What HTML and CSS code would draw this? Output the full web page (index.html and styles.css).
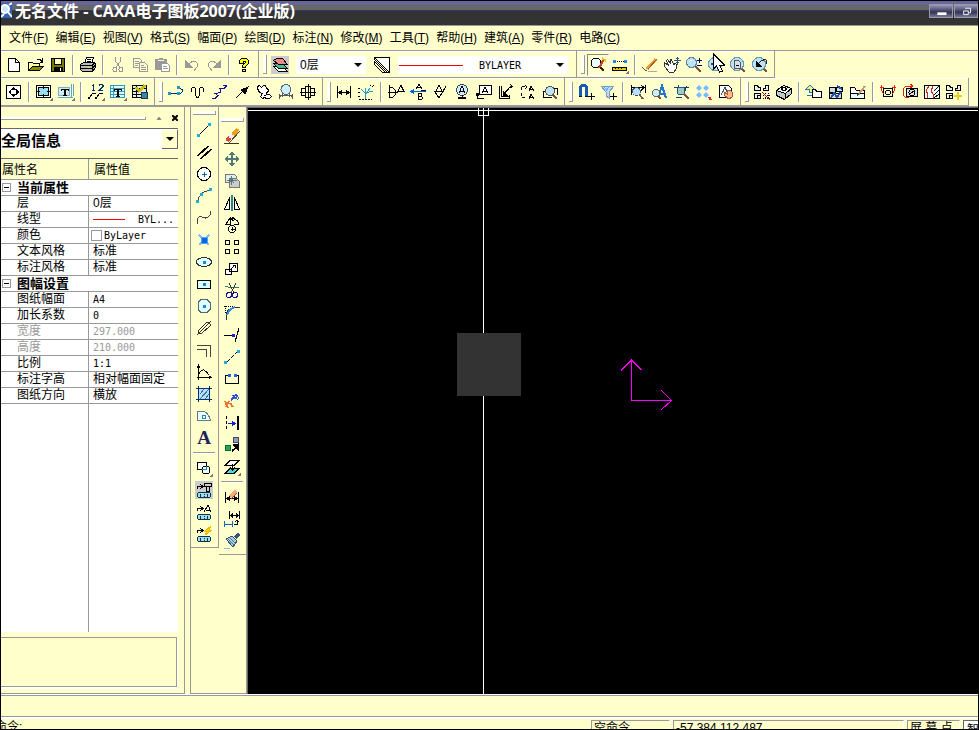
FILE: index.html
```html
<!DOCTYPE html>
<html lang="zh-CN">
<head>
    <meta charset="UTF-8">
    <meta name="viewport" content="width=device-width, initial-scale=1.0">
    <title>无名文件 - CAXA电子图板2007(企业版)</title>
    <link rel="stylesheet" href="styles.css">
</head>
<body>

<svg class="defs" aria-hidden="true">
    <symbol id="lens" viewBox="0 0 18 18">
        <path d="M10 10l6 6" stroke="#754" stroke-width="2"/>
        <circle cx="6.500" cy="6.500" r="5" fill="#bde3f7" stroke="#5a8aa0"/>
        <path d="M4 6q1-2 3-2" stroke="#fff"/>
    </symbol>
    <symbol id="biglens" viewBox="0 0 18 18">
        <path d="M12 12l4 4" stroke="#754" stroke-width="2"/>
        <circle cx="8" cy="8" r="6.500" fill="#bde3f7" stroke="#6a9ab0"/>
    </symbol>
    <symbol id="more" viewBox="0 0 18 18"><path d="M18 14v4h-4z" fill="#777" stroke="none"/></symbol>
    <symbol id="chip" viewBox="0 0 18 18"><rect x="2.500" y="11.500" width="13" height="5" rx="2" fill="#9de" stroke="#134"/><path d="M5.500 12.500v3M12.500 12.500v3M9 13v1M9 15v1" stroke="#134"/></symbol>
</svg>

<div class="app">
    <header class="titlebar">
        <svg class="app-icon" viewBox="0 0 11 18"><path d="M0 2h11v15H0z" fill="#2d62b5"/><circle cx="4" cy="8" r="4" fill="#cfe5ff" stroke="#fff" stroke-width="2"/><path d="M7 11l4 5M0 16l3-3M8 4l3-2" stroke="#fff" stroke-width="2"/></svg>
        <h1>无名文件 - CAXA电子图板2007(企业版)</h1>
        <div class="window-buttons">
            <button aria-label="最小化"><svg viewBox="0 0 24 14"><path d="M8 8h10v3H8z" fill="#fff"/></svg></button>
            <button aria-label="还原"><svg viewBox="0 0 24 14"><path d="M11 3.500h6v5h-2M9.500 6.500h5v4h-5z" fill="none" stroke="#fff"/></svg></button>
        </div>
    </header>

    <nav class="menubar">
        <button>文件(<u>F</u>)</button>
        <button>编辑(<u>E</u>)</button>
        <button>视图(<u>V</u>)</button>
        <button>格式(<u>S</u>)</button>
        <button>幅面(<u>P</u>)</button>
        <button>绘图(<u>D</u>)</button>
        <button>标注(<u>N</u>)</button>
        <button>修改(<u>M</u>)</button>
        <button>工具(<u>T</u>)</button>
        <button>帮助(<u>H</u>)</button>
        <button>建筑(<u>A</u>)</button>
        <button>零件(<u>R</u>)</button>
        <button>电路(<u>C</u>)</button>
    </nav>

    <div class="toolbar-row upper">
        <div class="band first">
            <button class="tool" aria-label="新建"><svg viewBox="0 0 18 18"><path d="M3.500 2.500h7l4 4v9h-11z" fill="#fff"/><path d="M10.500 2.500v4h4"/></svg></button>
            <button class="tool" aria-label="打开"><svg viewBox="0 0 18 18"><path d="M1.500 14.500v-8h4l1 1h6v3" fill="#ffffa0"/><path d="M1.500 14.500l4-4h11l-4 4z" fill="#880"/><path d="M10 3.500h3l2 2M15.500 2v4h-3"/></svg></button>
            <button class="tool" aria-label="保存"><svg viewBox="0 0 18 18"><path d="M2.500 2.500h13v13h-13z" fill="#770"/><path d="M5.500 2.500h7v6h-7z" fill="#ffc"/><path d="M5 11h8v4H5z" fill="#000"/><path d="M11 12h1v3h-1z" fill="#fff" stroke="none"/></svg></button>
            <span class="sep"></span>
            <button class="tool" aria-label="打印"><svg viewBox="0 0 18 18"><path d="M5.500 7.500l2-6h7l-2 6z" fill="#fff"/><path d="M8 3.500h4M8 5.500h4"/><path d="M1.500 8.500l3-2h11l1 1v4l-3 4h-10l-2-2z" fill="#bbb"/><path d="M2 9.500h11l3-3M2 12.500h11l3-3M13.500 9v6M4 15.500h9"/><path d="M9 11h2" stroke="#ee0"/></svg></button>
            <span class="sep"></span>
            <button class="tool" aria-label="剪切"><svg viewBox="0 0 18 18"><path d="M6.500 1v4l4 6M11.500 1v4l-4 6" stroke="#999"/><circle cx="6" cy="13.500" r="2" stroke="#999"/><circle cx="12" cy="13.500" r="2" stroke="#999"/></svg></button>
            <button class="tool" aria-label="复制"><svg viewBox="0 0 18 18"><g stroke="#999"><path d="M2.500 2.500h6l2 2v7h-8zM4 5.500h4M4 7.500h4M4 9.500h3"/><path d="M8.500 6.500h5l3 3v6h-8z" fill="#ffc"/><path d="M10 9.500h3M10 11.500h5M10 13.500h5"/></g></svg></button>
            <button class="tool" aria-label="粘贴"><svg viewBox="0 0 18 18"><g stroke="#999"><path d="M2.500 3.500h11v10h-11z" fill="#999"/><path d="M5 4.500h6" stroke="#ffc"/><path d="M6 2.500h4"/><path d="M8.500 7.500h6l2 2v6h-8z" fill="#fff"/><path d="M10 10.500h4M10 12.500h5"/></g></svg></button>
            <span class="sep"></span>
            <button class="tool" aria-label="撤销"><svg viewBox="0 0 18 18"><path d="M5 9q4-5 8-3q4 3 0 6l-2 3M2.500 5v6h6z" stroke="#999"/><path d="M3 6v5h5z" fill="#999" stroke="none"/></svg></button>
            <button class="tool" aria-label="重做"><svg viewBox="0 0 18 18"><path d="M13 9q-4-5-8-3q-4 3 0 6l2 3M15.500 5v6h-6z" stroke="#999"/><path d="M15 6v5h-5z" fill="#999" stroke="none"/></svg></button>
            <span class="sep"></span>
            <button class="tool" aria-label="帮助"><svg viewBox="0 0 18 18"><path d="M4.500 7.500V4.500l2-2h5l2 2v3l-3 3v1h-3v-2l3-3v-1h-2v2z" fill="#ff0"/><path d="M7.500 13.500h3v2h-3z" fill="#ff0"/></svg></button>
        </div>
        <div class="band">
            <button class="tool pressed" aria-label="层控制"><svg viewBox="0 0 18 18"><path d="M2.500 10.500h9l5 5h-9z" fill="#fff"/><path d="M2.500 7.500h9l5 5h-9z" fill="#4b8"/><path d="M2.500 4.500l3-2h6l5 6h-9z" fill="#e88"/></svg></button>
            <div class="combo layer-combo">
                <select aria-label="当前层"><option>0层</option></select>
                <svg class="arrow" viewBox="0 0 8 4"><path d="M0 0h8L4 4z"/></svg>
            </div>
            <button class="tool" aria-label="线型"><svg viewBox="0 0 18 18"><path d="M1.500 1.500h15v15z" fill="#fff"/><path d="M1.500 1.500v2l13 13h2M1.500 5.500l11 11M1.500 8.500l8 8h7M1.500 5v4"/></svg></button>
            <div class="combo line-combo">
                <span class="line-sample"></span>
                <select class="mono" aria-label="当前线型"><option>BYLAYER</option></select>
                <svg class="arrow" viewBox="0 0 8 4"><path d="M0 0h8L4 4z"/></svg>
            </div>
        </div>
        <div class="band">
            <button class="tool sunken" aria-label="捕捉"><svg viewBox="0 0 18 18"><circle cx="7" cy="7" r="5" fill="#eff"/><path d="M10 10l5 5" stroke="#222" stroke-width="2"/><path d="M15 3l-5 9" stroke="#c42" stroke-width="2"/><path d="M13 2l4 3" stroke="#fb3" stroke-width="2"/></svg></button>
            <button class="tool" aria-label="测量"><svg viewBox="0 0 18 18"><path d="M2 4h3v3H2zM13 4h3v3h-3z" fill="#28d" stroke="none"/><path d="M6 5.500h7" stroke-dasharray="1 1"/><path d="M1.500 11.500h14v3h-14z" fill="#ec0"/><path d="M4.500 11v2M7.500 11v2M10.500 11v2"/><use href="#more"/></svg></button>
            <span class="sep"></span>
            <button class="tool" aria-label="重画"><svg viewBox="0 0 18 18"><path d="M15 3L6 13" stroke="#e93" stroke-width="3"/><path d="M16 3L7 13" stroke="#a52"/><path d="M1 11l3 3h2" stroke="#742"/><path d="M7 15.500h9" stroke="#aaa"/></svg></button>
            <button class="tool" aria-label="动态平移"><svg viewBox="0 0 18 18"><path d="M1.500 6.500l4 3-2-5 1-1 3 4V3.500h1l2 5 2-1 1 1v4l-3 4h-4l-5-6z" fill="#fff" stroke="#333"/><path d="M14.500 1v8M11 4.500h7M13 2.500h3M13 6.500h3" stroke="#357"/></svg></button>
            <button class="tool" aria-label="动态缩放"><svg viewBox="0 0 18 18"><use href="#lens"/><path d="M12 4.500h5M14.500 2v5M12 9.500h5" stroke="#006"/></svg></button>
            <button class="tool hovered" aria-label="显示全部"><svg viewBox="0 0 18 18"><use href="#biglens"/><path d="M8 4v8M4 8h8" stroke="#247" stroke-width="2"/></svg><svg class="pointer" viewBox="0 0 13 21"><path d="M1.500 1v15l3-3 3 6 3-1-3-6h5z" fill="#fff" stroke="#000"/></svg></button>
            <button class="tool" aria-label="显示窗口"><svg viewBox="0 0 18 18"><use href="#biglens"/><path d="M5.500 4.500h4l2 2v6h-6z" fill="#dde" stroke="#555"/><path d="M7 9.500h3"/></svg></button>
            <button class="tool" aria-label="显示上一步"><svg viewBox="0 0 18 18"><use href="#biglens"/><path d="M7 9q3-6 8-5v4" stroke="#222"/><path d="M5 5v6h6z" fill="#000" stroke="none"/></svg></button>
        </div>
    </div>

    <div class="toolbar-row">
        <div class="band first">
            <button class="tool" aria-label="图幅"><svg viewBox="0 0 18 18"><path d="M1.500 2.500h14v13h-14z" fill="#fff"/><path d="M1.500 2.500h14v13h-14z"/><path d="M8.500 4l3 3h-6zM8.500 14l3-3h-6zM3 9l3-3v6zM14 9l-3-3v6z" fill="#000" stroke="none"/></svg></button>
            <span class="sep"></span>
            <button class="tool" aria-label="图框"><svg viewBox="0 0 18 18"><path d="M1.500 2.500h14v12h-14z" fill="#fff"/><path d="M3.500 4.500h10v8h-10z" fill="#9de"/><path d="M8.500 3v3M8.500 11v3M2 8.500h3M12 8.500h3"/><use href="#more"/></svg></button>
            <button class="tool" aria-label="标题栏"><svg viewBox="0 0 18 18"><path d="M1 14.500h15M14.500 1v14M16.500 1v12" stroke="#5ac"/><path d="M1.500 4.500h11v8h-11z" fill="#cee" stroke="#8ab"/><path d="M4.500 8V6.500h7V8M6 12.500h4"/><path d="M8 7v6" stroke-width="2"/><use href="#more"/></svg></button>
            <span class="sep"></span>
            <button class="tool" aria-label="零件序号"><svg viewBox="0 0 18 18"><path d="M6.500 1v6M5 2.500h1M5 7.500h3M12 2.500l1-1h2l1 1v1l-4 4h4" stroke="#036"/><path d="M2 15l4-5h3M9 15l4-5h3"/><path d="M1 14h2v2H1zM8 14h2v2H8z" fill="#000" stroke="none"/><use href="#more"/></svg></button>
            <button class="tool" aria-label="明细表"><svg viewBox="0 0 18 18"><path d="M1.500 2.500h14v12h-14z" fill="#dff" stroke="#39b"/><path d="M2 5.500h13M2 8.500h13M2 11.500h13M4.500 3v11" stroke="#39b"/><path d="M5.500 8V6.500h7V8M7 13.500h4"/><path d="M9 7v6" stroke-width="2"/><use href="#more"/></svg></button>
            <button class="tool" aria-label="图纸配置"><svg viewBox="0 0 18 18"><path d="M1.500 2.500h14v12h-14z" fill="#dee"/><path d="M2 5.500h13M2 8.500h8M2 11.500h8M5.500 3v11"/><path d="M5 4l3 4 2-1 4-5" stroke="#cb0" stroke-width="3"/><path d="M10.500 9.500h6v6h-6z" fill="#38a" stroke="#234"/></svg></button>
        </div>
        <div class="band">
            <button class="tool" aria-label="多段线"><svg viewBox="0 0 18 18"><path d="M2 10.500h10q5-1 3-4l-3-2" stroke="#036"/><path d="M1 9h3v3H1zM10 9h3v3h-3zM10 3h3v3h-3z" fill="#29c" stroke="none"/></svg></button>
            <button class="tool" aria-label="波浪线"><svg viewBox="0 0 18 18"><path d="M2.500 9V6l1-2h2l1 2v6l1 2h2l1-2V6l1-2h2l1 2v3"/></svg></button>
            <button class="tool" aria-label="双折线"><svg viewBox="0 0 18 18"><path d="M1 15.500h3l3-3-3-2 6-1-1-4h4l3-3M12 2.500h4" stroke="#119"/></svg></button>
            <button class="tool" aria-label="箭头"><svg viewBox="0 0 18 18"><path d="M3 15l6-6"/><path d="M15 4l-3 7-4-4z" fill="#000"/></svg></button>
            <button class="tool" aria-label="齿轮"><svg viewBox="0 0 18 18"><path d="M2.500 3.500l2-1 2 2 2-2h2l1 3 2 1v2l-2 1v2h3l2 2-2 2h-3l-2-1-2 1-2-2 2-3-3-1-2-4z" fill="#fff"/><path d="M9 12h2"/></svg></button>
            <button class="tool" aria-label="圆弧拟合"><svg viewBox="0 0 18 18"><circle cx="9" cy="6.500" r="5" fill="#cef" stroke="#567"/><path d="M2.500 16v-4l3 1 3-1 4 1 3-1v4M6 11l-3 3M12 11l3 3" stroke="#555"/></svg></button>
            <button class="tool" aria-label="孔轴"><svg viewBox="0 0 18 18"><path d="M2.500 5.500h4v7h-4zM6.500 3.500h5v11h-5zM11.500 5.500h4v7h-4zM1 9.500h16M9.500 1v16"/></svg></button>
        </div>
        <div class="band">
            <button class="tool" aria-label="基本标注"><svg viewBox="0 0 18 18"><path d="M2.500 3v12M15.500 3v12M2 9.500h14"/><path d="M3 9.500l4-3v6zM15 9.500l-4-3v6z" fill="#000" stroke="none"/></svg></button>
            <button class="tool" aria-label="坐标标注"><svg viewBox="0 0 18 18"><path d="M8.500 5v12M4 6l4 4 8-2M8 12l5-7" stroke="#29c"/><path d="M1 5.500h3M1 9.500h3M1 13.500h3M13 2l2 2 2-2M2 16.500h13" stroke-dasharray="2 1"/></svg></button>
            <span class="sep"></span>
            <button class="tool" aria-label="倒角标注"><svg viewBox="0 0 18 18"><path d="M2.500 2v13M2.500 4.500h3l3 3v4l-3 3h-3M1 9.500h9l4-7 3 6h-6"/></svg></button>
            <button class="tool" aria-label="基准代号"><svg viewBox="0 0 18 18"><path d="M7 6l3-5 3 5M8 4.500h4M12 7h5"/><path d="M3 8.500h14" stroke="#06c"/><path d="M1 8.500l4-3v6z" fill="#06c" stroke="none"/><path d="M9.500 10.500v6h3l1-1v-1l-1-1h-3 3v-3z"/></svg></button>
            <button class="tool" aria-label="粗糙度"><svg viewBox="0 0 18 18"><path d="M3 8.500h10M4 9l4 6 7-12M5 8l3-6 3 6"/></svg></button>
            <button class="tool" aria-label="形位公差"><svg viewBox="0 0 18 18"><circle cx="9" cy="7" r="5.500" fill="#cef" stroke="#345"/><path d="M6 10l3-7 3 7M7 8.500h4M9.500 12v3"/><path d="M5 15h8" stroke-width="2"/></svg></button>
            <button class="tool" aria-label="引出说明"><svg viewBox="0 0 18 18"><path d="M4.500 2.500h12v9h-12z" fill="#fff"/><path d="M7 10l3-6 3 6M8 8.500h4M2.500 12v3.500h6"/><path d="M1 10h3v3H1z" fill="#000" stroke="none"/></svg></button>
            <button class="tool" aria-label="剖切符号"><svg viewBox="0 0 18 18"><path d="M2.500 3v12h10v-3M4.500 3v10h8M7 11l7-8M13 1l2 2M13 5l3-2"/><path d="M6 8v4h4z" fill="#000"/></svg></button>
            <button class="tool" aria-label="文字变更"><svg viewBox="0 0 18 18"><path d="M6 3.500H2.500V7M2.500 10v4h4" stroke-dasharray="3 1"/><path d="M10 8l2-5 3 5M11 6.500h3M10 16l2-5 3 5M11 14.500h3M6 2l2 2-2 2"/></svg></button>
            <button class="tool" aria-label="局部放大"><svg viewBox="0 0 18 18"><path d="M2.500 14.500v-6h2M2 14.500h9M13 5.500h3.500v6"/><path d="M12 12l4 4" stroke="#754" stroke-width="2"/><circle cx="9" cy="8" r="4.500" fill="#bde3f7" stroke="#555"/></svg></button>
        </div>
        <div class="band">
            <button class="tool" aria-label="捕捉点"><svg viewBox="0 0 18 18"><path d="M3.500 14V4l2-2h2l2 2v10" stroke="#135bb5" stroke-width="3"/><path d="M2 13h3M8 13h3" stroke="#013"/><path d="M14.500 10v7M11 13.500h7"/></svg></button>
            <button class="tool" aria-label="过滤"><svg viewBox="0 0 18 18"><path d="M2 3h13l-5 6v6l-3-2V9z" fill="#bdf" stroke="#79b"/><path d="M5 3l3 5M10 3l-2 4" stroke="#5af"/><path d="M14.500 10v7M11 13.500h7"/></svg></button>
            <span class="sep"></span>
            <button class="tool" aria-label="尺寸驱动"><svg viewBox="0 0 18 18"><path d="M2.500 2v10M16.500 2v8M3 4.500h13M12 2l3 2.500-3 3"/><path d="M10 11l4 5" stroke-width="2" stroke="#754"/><circle cx="7.500" cy="8.500" r="4" fill="#bdf" stroke="#357"/></svg></button>
            <button class="tool" aria-label="文字查找"><svg viewBox="0 0 18 18"><path d="M7 14l4-11 4 12M8 11h6" stroke="#27c" stroke-width="2"/><circle cx="5" cy="10" r="3.500" fill="#cee" stroke="#567"/><path d="M7 13l3 3" stroke="#754" stroke-width="2"/></svg></button>
            <button class="tool" aria-label="网格"><svg viewBox="0 0 18 18"><path d="M1 4.500h15M3 14.500h6M5 2l2 4M14 3l-4 9" stroke="#146"/><circle cx="8" cy="8" r="4" fill="#9cc" stroke="#357"/><path d="M11 11l5 5" stroke="#754" stroke-width="2"/></svg></button>
            <button class="tool" aria-label="点阵"><svg viewBox="0 0 18 18"><path d="M4 2l3 3-3 3-3-3zM11 2l3 3-3 3-3-3zM4 9l3 3-3 3-3-3zM11 9l3 3-3 3-3-3z" fill="#7bf" stroke="#bdf"/><path d="M14 14l2 3" stroke="#d22" stroke-width="2"/></svg></button>
            <button class="tool" aria-label="格式刷"><svg viewBox="0 0 18 18"><path d="M2.500 2.500h9l3 3v9h-12z" fill="#fff"/><path d="M4 12l4-8 2 5" stroke="#357"/><path d="M7 9l3 2V7l2 1 1-1 3 3-1 4-3 2-4-3z" fill="#fb8" stroke="#a53"/></svg></button>
        </div>
        <div class="band">
            <button class="tool" aria-label="提取图符"><svg viewBox="0 0 18 18"><path d="M1.500 2.500h3l1 2h2v3h-6zM12.500 2.500h3v5h-5v-2h2zM1.500 10.500h6v5h-6zM4.500 12.500h3v3h-3z" fill="#eee"/><path d="M12 10v6M15 10v6M10 12h7M10 15h7" stroke-dasharray="1 1"/><path d="M9 9l8 8" stroke="#d00"/></svg></button>
            <button class="tool" aria-label="构件库"><svg viewBox="0 0 18 18"><path d="M1.500 7.500l7-5 8 3-6 5z" fill="#fff"/><path d="M1.500 7.500v5l8 4 7-6v-5l-6 5z" fill="#bcc"/><path d="M10 11v5M6 6l3-2 3 2-3 2z"/></svg></button>
            <span class="sep"></span>
            <button class="tool" aria-label="块创建"><svg viewBox="0 0 18 18"><path d="M5 2l4 4H7v3H4V6H1z" fill="#fe8" stroke="#27a"/><path d="M7.500 6.500h3l1 2h5v6h-9z" fill="#fff"/><path d="M2 12.500h5" stroke="#27a"/></svg></button>
            <button class="tool" aria-label="块属性"><svg viewBox="0 0 18 18"><path d="M2.500 4.500h6v5h-6zM9.500 4.500h6v4h-6zM2.500 10.500h12v5h-12z" fill="#cdd"/><path d="M4 15l3-5 3 4 4-5M10 3l5 3" stroke="#25a" stroke-width="2"/></svg></button>
            <button class="tool" aria-label="块编辑"><svg viewBox="0 0 18 18"><path d="M1.500 4.500h4l2 3h8v8h-14z" fill="#fff"/><path d="M1.500 10.500h14v5h-14z" fill="#eff"/><path d="M16 3l-7 9" stroke="#c96" stroke-width="2"/><path d="M8 13l2-3" stroke="#444"/></svg></button>
            <span class="sep"></span>
            <button class="tool" aria-label="电路一"><svg viewBox="0 0 18 18"><path d="M4.500 5.500h9v8h-9z" fill="#ffc"/><circle cx="9" cy="9.500" r="2.500"/><path d="M2.500 2v5l2 4M15.500 2v5l-2 4M1 4.500h4M13 4.500h4" stroke="#d21"/></svg></button>
            <button class="tool" aria-label="电路二"><svg viewBox="0 0 18 18"><path d="M5.500 5.500h11v8h-11z" fill="#ddd"/><circle cx="11" cy="9.500" r="3"/><path d="M9 11l4-3"/><path d="M12 3.500H4.500l-2 2v7l2 2h3M9 1l3 2-3 2" stroke="#d21"/></svg></button>
            <button class="tool" aria-label="剖面"><svg viewBox="0 0 18 18"><path d="M1.500 2.500h15v13h-15z" fill="#eff"/><path d="M6 3l-3 5 2 3-1 4M10 3l-2 5 2 3v4" stroke="#d21"/><path d="M11 8l5-5M11 12l5-5M11 15l5-4"/></svg></button>
            <button class="tool" aria-label="图库"><svg viewBox="0 0 18 18"><path d="M1.500 2.500h3l1 2h2v3h-6zM12.500 2.500h3v5h-5v-2h2zM1.500 10.500h6v5h-6zM4.500 12.500h3v3h-3z" fill="#eee"/><path d="M13 9v8M9 13h8" stroke="#ec2" stroke-width="2"/></svg></button>
        </div>
    </div>

    <main class="workspace">
        <aside class="panel">
            <div class="panel-caption">
                <span class="panel-grip"></span>
                <button aria-label="收起"><svg viewBox="0 0 5 3"><path d="M0 3l2-3h1l2 3z" fill="#888"/></svg></button>
                <button aria-label="关闭"><svg viewBox="0 0 6 6"><path d="M0 0l6 6M6 0L0 6" stroke="#000" stroke-width="2"/></svg></button>
            </div>
            <div class="scope">
                <select aria-label="信息范围"><option>全局信息</option></select>
                <span class="scope-arrow"><svg viewBox="0 0 8 4"><path d="M0 0h8L4 4z"/></svg></span>
            </div>
            <table class="props">
                <thead>
                    <tr><th>属性名</th><th>属性值</th></tr>
                </thead>
                <tbody>
                    <tr class="group"><th colspan="2"><div><button aria-label="折叠"></button>当前属性</div></th></tr>
                    <tr><td>层</td><td>0层</td></tr>
                    <tr><td>线型</td><td><span class="line-value mono"><i></i>BYL...</span></td></tr>
                    <tr><td>颜色</td><td><span class="color-value mono"><i></i>ByLayer</span></td></tr>
                    <tr><td>文本风格</td><td>标准</td></tr>
                    <tr><td>标注风格</td><td>标准</td></tr>
                    <tr class="group"><th colspan="2"><div><button aria-label="折叠"></button>图幅设置</div></th></tr>
                    <tr><td>图纸幅面</td><td class="mono">A4</td></tr>
                    <tr><td>加长系数</td><td class="mono">0</td></tr>
                    <tr class="off"><td>宽度</td><td class="mono">297.000</td></tr>
                    <tr class="off"><td>高度</td><td class="mono">210.000</td></tr>
                    <tr><td>比例</td><td class="mono">1:1</td></tr>
                    <tr><td>标注字高</td><td>相对幅面固定</td></tr>
                    <tr><td>图纸方向</td><td>横放</td></tr>
                </tbody>
            </table>
            <div class="props-rest"><span></span></div>
            <div class="hint"></div>
        </aside>

        <div class="side-tools">
            <div class="side-bar">
                <button class="tool" aria-label="直线"><svg viewBox="0 0 18 18"><path d="M4 14L14 4"/><path d="M2 13h3v3H2zM13 2h3v3h-3z" fill="#2ad" stroke="none"/></svg></button>
                <button class="tool" aria-label="平行线"><svg viewBox="0 0 18 18"><path d="M2 13L13 3M3 13L14 3M5 16L16 6M6 16L17 6"/></svg></button>
                <button class="tool" aria-label="圆"><svg viewBox="0 0 18 18"><circle cx="9" cy="9" r="6.500" fill="#fff"/><path d="M9.500 7v5M7 9.500h5" stroke="#069"/></svg></button>
                <button class="tool" aria-label="圆弧"><svg viewBox="0 0 18 18"><path d="M3 14q1-9 12-11" stroke="#444"/><path d="M1 13h3v3H1zM5 6h3v3H5zM14 1h3v3h-3z" fill="#2ad" stroke="none"/></svg></button>
                <button class="tool" aria-label="样条"><svg viewBox="0 0 18 18"><path d="M2 15v-3q1-6 5-4t6 0q3-2 3-6" stroke="#444"/></svg></button>
                <button class="tool" aria-label="点"><svg viewBox="0 0 18 18"><path d="M4 4l10 10M14 4L4 14" stroke="#8be" stroke-width="2"/><path d="M6 6h6v6H6z" fill="#16d" stroke="#4af"/></svg></button>
                <button class="tool" aria-label="椭圆"><svg viewBox="0 0 18 18"><ellipse cx="9" cy="9" rx="7.500" ry="4.500" fill="#dff" stroke="#333"/><path d="M8 8h3v3H8z" fill="#28c" stroke="none"/></svg></button>
                <button class="tool" aria-label="矩形"><svg viewBox="0 0 18 18"><path d="M2.500 5.500h13v8h-13z" fill="#dff"/><path d="M8 8h3v3H8z" fill="#28c" stroke="none"/></svg></button>
                <button class="tool" aria-label="正多边形"><svg viewBox="0 0 18 18"><path d="M6 2.500h6l3 3v7l-3 3H6l-3-3v-7z" fill="#dff" stroke="#567"/><path d="M8 8h3v3H8z" fill="#28c" stroke="none"/></svg></button>
                <button class="tool" aria-label="中心线"><svg viewBox="0 0 18 18"><path d="M2 16L16 2M4 11l7-7q3-1 4 1t-1 3l-7 6q-3 1-4-1z" stroke="#333"/></svg></button>
                <button class="tool" aria-label="等距线"><svg viewBox="0 0 18 18"><path d="M2 4.500h13.500V16M2 8.500h9.500V16" stroke="#444"/></svg></button>
                <button class="tool" aria-label="公式曲线"><svg viewBox="0 0 18 18"><path d="M3.500 17V3M2 5l1.500-3L5 5M2 14.500h14M14 13l2 1.500-2 1.500M3 13q3-7 6-6 2 1 5 5"/></svg></button>
                <button class="tool" aria-label="剖面线"><svg viewBox="0 0 18 18"><path d="M4 4h10v10H4z" fill="#bdf" stroke="none"/><path d="M5 9l4-5M5 14l9-10M10 14l4-5" stroke="#37a"/><path d="M3.500 1v16M14.500 1v16M1 3.500h16M1 14.500h16" stroke="#036"/></svg></button>
                <button class="tool" aria-label="填充"><svg viewBox="0 0 18 18"><path d="M2.500 13.500v-9h6q5 1 7 9z" fill="#eff" stroke="#678"/><path d="M7.500 8.500h3v3h-3z" stroke="#28a"/></svg></button>
                <button class="tool letter" aria-label="文字">A</button>
                <span class="sep"></span>
                <button class="tool" aria-label="块"><svg viewBox="0 0 18 18"><path d="M2.500 3.500h9v7h-9z" fill="#fff"/><circle cx="11" cy="11" r="4" fill="#eff"/><path d="M7 10.500h4.500V7" stroke="#28a"/><use href="#more"/></svg></button>
                <button class="tool pressed" aria-label="库操作一"><svg viewBox="0 0 18 18"><path d="M2.500 8V5.500h5M5 3l3 2.500L5 8M9.500 2.500h7v3h-7zM11.500 6v4h3V6" /><use href="#chip"/></svg></button>
                <button class="tool" aria-label="库操作二"><svg viewBox="0 0 18 18"><path d="M2.500 8V5.500h5M5 3l3 2.500L5 8M9 9l4-7 3 7M11 7.500h4"/><use href="#chip"/></svg></button>
                <button class="tool" aria-label="库操作三"><svg viewBox="0 0 18 18"><path d="M2.500 8V5.500h5M5 3l3 2.500L5 8"/><path d="M16 1l-6 5h3l-3 4 7-5h-3z" fill="#fd0" stroke="#eb0"/><use href="#chip"/></svg></button>
            </div>
            <div class="side-bar second">
                <button class="tool" aria-label="删除"><svg viewBox="0 0 18 18"><path d="M1 15.500h15" stroke="#333"/><path d="M4 13l3-4" stroke="#d43" stroke-width="4"/><path d="M7 10l3-4" stroke="#eef" stroke-width="4"/><path d="M10 7l5-6" stroke="#e9a31d" stroke-width="4"/><path d="M6 15L17 3" stroke="#643"/></svg></button>
                <button class="tool" aria-label="平移"><svg viewBox="0 0 18 18"><path d="M9 3v12M3 9h12" stroke="#577" stroke-width="2"/><path d="M9 1l3 4H6zM9 17l3-4H6zM1 9l4-3v6zM17 9l-4-3v6z" fill="#577" stroke="none"/></svg></button>
                <button class="tool" aria-label="复制选择"><svg viewBox="0 0 18 18"><path d="M2.500 2.500h9l2 2v6h-11z" fill="#dee" stroke="#777"/><path d="M6.500 6.500h7l3 3v6h-10z" fill="#ccc" stroke="#777"/><path d="M8.500 4v9M4 8.500h10M6 6l5 5M11 6l-5 5" stroke="#577"/></svg></button>
                <button class="tool" aria-label="镜像"><svg viewBox="0 0 18 18"><path d="M1.500 15.500h5v-12zM16.500 15.500h-5v-12z" fill="#fff"/><path d="M9 1v16" stroke="#288" stroke-width="2"/></svg></button>
                <button class="tool" aria-label="旋转"><svg viewBox="0 0 18 18"><path d="M2.500 8.500h5v-7zM10 2.500q5 1 6 6M8 3l3-2M8 3l3 2M11 8.500h5"/><circle cx="9" cy="13" r="3.500"/><path d="M9.500 11v4M8 13.500h4"/></svg></button>
                <button class="tool" aria-label="阵列"><svg viewBox="0 0 18 18"><path d="M2.500 2.500h4v4h-4zM11.500 2.500h4v4h-4zM2.500 11.500h4v4h-4zM11.500 11.500h4v4h-4z"/></svg></button>
                <button class="tool" aria-label="比例缩放"><svg viewBox="0 0 18 18"><path d="M6.500 3.500h8v8h-8zM2.500 9.500h6v5h-6z" fill="#fff"/><path d="M8 9l4-4M10 5.500h2.500v2"/></svg></button>
                <button class="tool" aria-label="裁剪"><svg viewBox="0 0 18 18"><path d="M2 4q6 3 14 1" stroke="#376"/><path d="M6 1l5 10M13 1L8 11" stroke="#333"/><circle cx="6" cy="13" r="2.500" stroke="#119"/><circle cx="12" cy="13" r="2.500" stroke="#119"/></svg></button>
                <button class="tool" aria-label="过渡"><svg viewBox="0 0 18 18"><path d="M3.500 16v-6q1-6 8-6.500H17" stroke="#333"/><path d="M4 11q2-6 8-8" stroke="#38d" stroke-width="2"/><path d="M1 2.500h10M2.500 2v8" stroke-dasharray="1 1"/></svg></button>
                <button class="tool" aria-label="齐边"><svg viewBox="0 0 18 18"><path d="M1 9.500h8"/><path d="M9 9.500h3" stroke="#22c" stroke-width="3"/><path d="M12 16l4-14"/></svg></button>
                <button class="tool" aria-label="打断"><svg viewBox="0 0 18 18"><path d="M4 14L14 4" stroke-dasharray="4 2"/><path d="M1 13h3v3H1zM14 2h3v3h-3z" fill="#2ad" stroke="none"/></svg></button>
                <button class="tool" aria-label="拉伸"><svg viewBox="0 0 18 18"><path d="M6 5.500H2.500v8h13v-8H13" /><path d="M5 4h3v3H5zM11 4h3v3h-3z" fill="#26d" stroke="none"/></svg></button>
                <button class="tool" aria-label="打散"><svg viewBox="0 0 18 18"><path d="M2 9l3 7M6 9l-3 6M7 11l3 4" stroke="#e72" stroke-width="2"/><path d="M8 8l7-5M10 3l4 5M13 2v6M9 6h7" stroke="#35c" stroke-width="2" stroke-dasharray="2 1"/></svg></button>
                <button class="tool" aria-label="对齐"><svg viewBox="0 0 18 18"><path d="M3.500 2v14" stroke-dasharray="3 2"/><path d="M15 2v14" stroke-width="2"/><path d="M5 9.500h5" stroke="#12c"/><path d="M13 9.500l-4-3v6z" fill="#12c" stroke="none"/></svg></button>
                <button class="tool" aria-label="移动块"><svg viewBox="0 0 18 18"><path d="M10.500 1.500h5v5h-5z" fill="#99b" stroke="#446"/><path d="M2.500 9.500h5v5h-5z" fill="#2a4" stroke="#163"/><path d="M9 15l5-4" stroke-width="2"/><path d="M15 8v6l-5-5z" fill="#000"/></svg></button>
                <button class="tool" aria-label="改变层"><svg viewBox="0 0 18 18"><path d="M7 2.500h9l-5 5H2z" fill="#fff"/><path d="M7 10.500h9l-5 5H2z" fill="#4dd"/><path d="M9.500 6v6M7 9l2.500 3L12 9"/><use href="#more"/></svg></button>
                <span class="sep"></span>
                <button class="tool" aria-label="标注编辑"><svg viewBox="0 0 18 18"><path d="M2.500 4v11M15.500 4v11M2 10.500h14"/><path d="M3 10.500l4-3v6zM15 10.500l-4-3v6z" fill="#000" stroke="none"/><path d="M7 9l6-6" stroke="#fa7" stroke-width="4"/><path d="M8 11l6-6" stroke="#a42"/></svg></button>
                <button class="tool" aria-label="尺寸样式"><svg viewBox="0 0 18 18"><path d="M6.500 1v8M16.500 1v8M7 5.500h9"/><path d="M7 5.500l3-3v6zM16 5.500l-3-3v6z" fill="#000" stroke="none"/><path d="M1.500 11v6M9.500 11v6M2 14.500h7" stroke="#16c"/><path d="M11 14.500h3V11M12 12l2-2 2 2"/></svg></button>
                <button class="tool" aria-label="特性匹配"><svg viewBox="0 0 18 18"><path d="M12 6l4-4" stroke="#357" stroke-width="3"/><path d="M3 7l6-3 5 5-4 6z" fill="#acd" stroke="#357"/><path d="M5 7l6 6M7 6l5 5" stroke="#579"/><path d="M1 16.500h6" stroke="#9bd"/></svg></button>
            </div>
        </div>

        <section class="canvas" aria-label="绘图区">
            <svg class="crosshair" shape-rendering="crispEdges">
                <path d="M235.500 0V600M230.500 0V7.500H240.500V0" stroke="#fff" fill="none"/>
                <line x1="0" y1="2.500" x2="100%" y2="2.500" stroke="#fff"/>
                <rect x="209" y="225" width="64" height="63" fill="#333"/>
                <path d="M383.500 252v40.500H423.500M373 262.500l10.500-10.500 10 10M413 282l10.500 10.500-10 9" stroke="#f0f" fill="none"/>
            </svg>
        </section>
    </main>

    <div class="command"></div>
    <footer class="status">
        <span class="prompt">命令:</span>
        <span class="cell state">空命令</span>
        <span class="cell coords">-57.384,112.487</span>
        <span class="cell snap">屏 幕 点</span>
        <select aria-label="捕捉方式"><option>智能</option></select>
    </footer>
</div>

</body>
</html>
```
FILE: styles.css
```css
* {
    box-sizing: border-box;
}
body {
    margin: 0;
    font-family: "Liberation Sans", "Noto Sans CJK SC", sans-serif;
    font-size: 12px;
    color: #000;
    background: #ffc;
}
button, select {
    font: inherit;
    color: inherit;
    background: none;
    border: 0;
    padding: 0;
    margin: 0;
    border-radius: 0;
}
select {
    appearance: none;
    outline: 0;
}
svg {
    display: block;
}
.defs {
    position: absolute;
    width: 0;
    height: 0;
}
.mono {
    font-family: "DejaVu Sans Mono", monospace;
    font-size: 10px;
}
.app {
    display: flex;
    flex-direction: column;
    height: 100vh;
    overflow: hidden;
    border: 1px solid #000;
}

/* title bar */
.titlebar {
    display: flex;
    flex: none;
    height: 25px;
    background: linear-gradient(#669 0 4px, #666 4px 9px, #336 9px 10px, #333 10px);
    border-bottom: 1px solid #999;
}
.app-icon {
    width: 11px;
    height: 18px;
    fill: none;
}
.titlebar h1 {
    flex: 1;
    margin: 0 0 0 3px;
    font-family: "Open Sans", "Noto Sans CJK SC", sans-serif;
    font-size: 16px;
    line-height: 20px;
    color: #fff;
    white-space: nowrap;
}
.window-buttons {
    display: flex;
    gap: 1px;
    padding-top: 3px;
}
.window-buttons button {
    width: 24px;
    height: 14px;
    background: linear-gradient(#99b, #557 40%, #335 60%, #779);
    border: 1px solid #99a;
}

/* menu */
.menubar {
    display: flex;
    flex: none;
    justify-content: space-between;
    max-width: 622px;
    height: 24px;
    padding: 1px 0 0 5px;
}
.menubar button {
    padding: 0 3px;
    line-height: 23px;
}

/* tool bars */
.toolbar-row {
    display: flex;
    flex: none;
    height: 28px;
}
.toolbar-row.upper {
    border-top: 1px solid #999;
}
.band {
    position: relative;
    display: flex;
    align-items: center;
    padding: 1px 3px 0 10px;
    border-right: 1px solid #999;
    border-bottom: 1px solid #999;
    box-shadow: inset 0 1px #fff;
}
.upper .band {
    padding-top: 2px;
}
.band::before {
    content: "";
    position: absolute;
    left: 4px;
    top: 4px;
    bottom: 3px;
    width: 3px;
    border: 1px solid #999;
    border-width: 0 1px 1px 0;
    background: #fff;
}
.band.first {
    padding-left: 2px;
}
.band.first::before {
    display: none;
}
.tool {
    display: flex;
    flex: none;
    align-items: center;
    justify-content: center;
    width: 22px;
    height: 22px;
}
.tool svg {
    width: 18px;
    height: 18px;
    fill: none;
    stroke: #000;
    shape-rendering: crispEdges;
}
.tool.pressed svg {
    background: #ccc;
}
.tool.sunken {
    border: 1px solid #888;
    border-right-color: #fff;
    border-bottom-color: #fff;
}
.tool.hovered {
    position: relative;
}
.tool .pointer {
    position: absolute;
    left: 7px;
    top: -1px;
    width: 13px;
    height: 21px;
}
.tool.letter {
    font-family: "Liberation Serif", serif;
    font-size: 19px;
    font-weight: bold;
    color: #225;
}
.sep {
    flex: none;
    width: 2px;
    height: 20px;
    margin: 0 3px;
    border-left: 1px solid #999;
    background: #fff;
}
.combo {
    display: flex;
    align-items: center;
    height: 18px;
    margin: 0 5px;
    background: #fff;
    position: relative;
}
.combo select {
    flex: 1;
    height: 18px;
    padding-left: 4px;
}
.combo .arrow {
    position: absolute;
    right: 4px;
    width: 8px;
    height: 4px;
    pointer-events: none;
}
.layer-combo {
    width: 70px;
}
.line-combo {
    width: 170px;
}
.line-sample {
    width: 64px;
    height: 2px;
    margin: 0 12px 0 1px;
    border-bottom: 1px solid #f00;
}

/* workspace */
.workspace {
    display: flex;
    flex: 1;
    min-height: 0;
    border-top: 1px solid #999;
    border-bottom: 1px solid #fff;
}
.panel {
    display: flex;
    flex: none;
    flex-direction: column;
    width: 184px;
    padding: 5px 6px 6px 0;
    border-right: 1px solid #999;
    border-bottom: 1px solid #999;
}
.panel-caption {
    display: flex;
    align-items: center;
    height: 12px;
    gap: 10px;
}
.panel-caption button svg {
    width: 6px;
    height: 6px;
}
.panel-caption button:nth-of-type(1) svg {
    height: 3px;
}
.panel-grip {
    width: 145px;
    height: 3px;
    border: 1px solid #999;
    border-width: 0 1px 1px 0;
    background: #fff;
}
.scope {
    display: flex;
    height: 22px;
    margin: 4px 0 8px;
    background: #fff;
    border-top: 1px solid #666;
}
.scope select {
    flex: 1;
    padding-top: 1px;
    font-size: 15px;
    font-weight: bold;
}
.scope-arrow {
    display: flex;
    align-items: center;
    justify-content: center;
    width: 16px;
    margin: 1px 0 1px 1px;
    background: #ffc;
    border: 1px solid #666;
    border-width: 0 1px 1px 0;
}
.scope-arrow svg {
    width: 8px;
    height: 4px;
}
.props {
    width: 100%;
    table-layout: fixed;
    border-spacing: 0;
    background: #fff;
    border-top: 1px solid #666;
    line-height: 15px;
}
.props th, .props td {
    height: 16px;
    padding: 0 0 0 4px;
    text-align: left;
    white-space: nowrap;
    overflow: hidden;
    border-bottom: 1px solid #999;
}
.props thead th {
    height: 21px;
    padding: 2px 0 0 5px;
    font-weight: normal;
    background: #ffc;
}
.props thead th:first-child {
    width: 88px;
    padding-left: 1px;
    border-right: 1px solid #999;
}
.props td:first-child {
    padding-left: 16px;
    border-right: 1px solid #999;
}
.props .group th {
    padding-left: 1px;
    font-size: 13px;
}
.group div {
    display: flex;
    align-items: center;
    gap: 6px;
    height: 15px;
}
.group button {
    width: 9px;
    height: 9px;
    border: 1px solid #999;
    background: linear-gradient(#000, #000) center / 5px 1px no-repeat;
}
.off {
    color: #999;
}
.line-value, .color-value {
    display: flex;
    align-items: center;
}
.line-value i {
    width: 32px;
    height: 1px;
    margin-right: 13px;
    background: #f00;
}
.color-value i {
    width: 11px;
    height: 11px;
    margin: 0 2px 0 -2px;
    border: 1px solid #999;
}
.props-rest {
    display: flex;
    flex: 1;
    background: #fff;
}
.props-rest span {
    width: 88px;
    border-right: 1px solid #999;
}
.hint {
    height: 50px;
    margin: 5px 1px 0 0;
    border: 1px solid #999;
    border-left: 0;
    box-shadow: 1px 2px #fff;
}
.side-tools {
    display: flex;
    flex: none;
    align-items: flex-start;
    align-self: stretch;
    margin-left: 5px;
    border: 1px solid #999;
    border-top: 0;
}
.side-bar {
    display: flex;
    flex-direction: column;
    align-items: center;
    width: 28px;
    padding: 0 1px 2px 0;
    border-right: 1px solid #999;
    border-bottom: 1px solid #999;
}
.side-bar.second {
    width: 27px;
    padding-top: 7px;
    border-right: 0;
}
.side-bar::before {
    content: "";
    width: 22px;
    height: 3px;
    margin: 4px 0;
    border: 1px solid #999;
    border-width: 0 1px 1px 0;
    background: #fff;
}
.side-bar .sep {
    width: 22px;
    height: 2px;
    margin: 3px 0;
    border-left: 0;
    border-top: 1px solid #999;
}
.canvas {
    flex: 1;
    background: #000;
    border-left: 1px solid #666;
    border-top: 1px solid #666;
}
.crosshair {
    width: 100%;
    height: 100%;
}

/* command line and status */
.command {
    flex: none;
    height: 22px;
    border: 1px solid #999;
    border-width: 1px 0;
    box-shadow: 0 2px #fff;
}
.status {
    display: flex;
    flex: none;
    height: 12px;
    gap: 3px;
    padding-top: 3px;
    overflow: hidden;
    line-height: 14px;
    white-space: nowrap;
}
.prompt {
    flex: 1;
    text-indent: -6px;
}
.cell {
    height: 18px;
    padding-left: 2px;
    border: 1px solid #999;
    border-right-color: #fff;
}
.state {
    width: 79px;
}
.coords {
    width: 231px;
}
.snap {
    width: 53px;
}
.status select {
    width: 15px;
    height: 20px;
    padding-left: 3px;
    background: #fff;
    border: 1px solid #666;
    border-right: 0;
}
```
